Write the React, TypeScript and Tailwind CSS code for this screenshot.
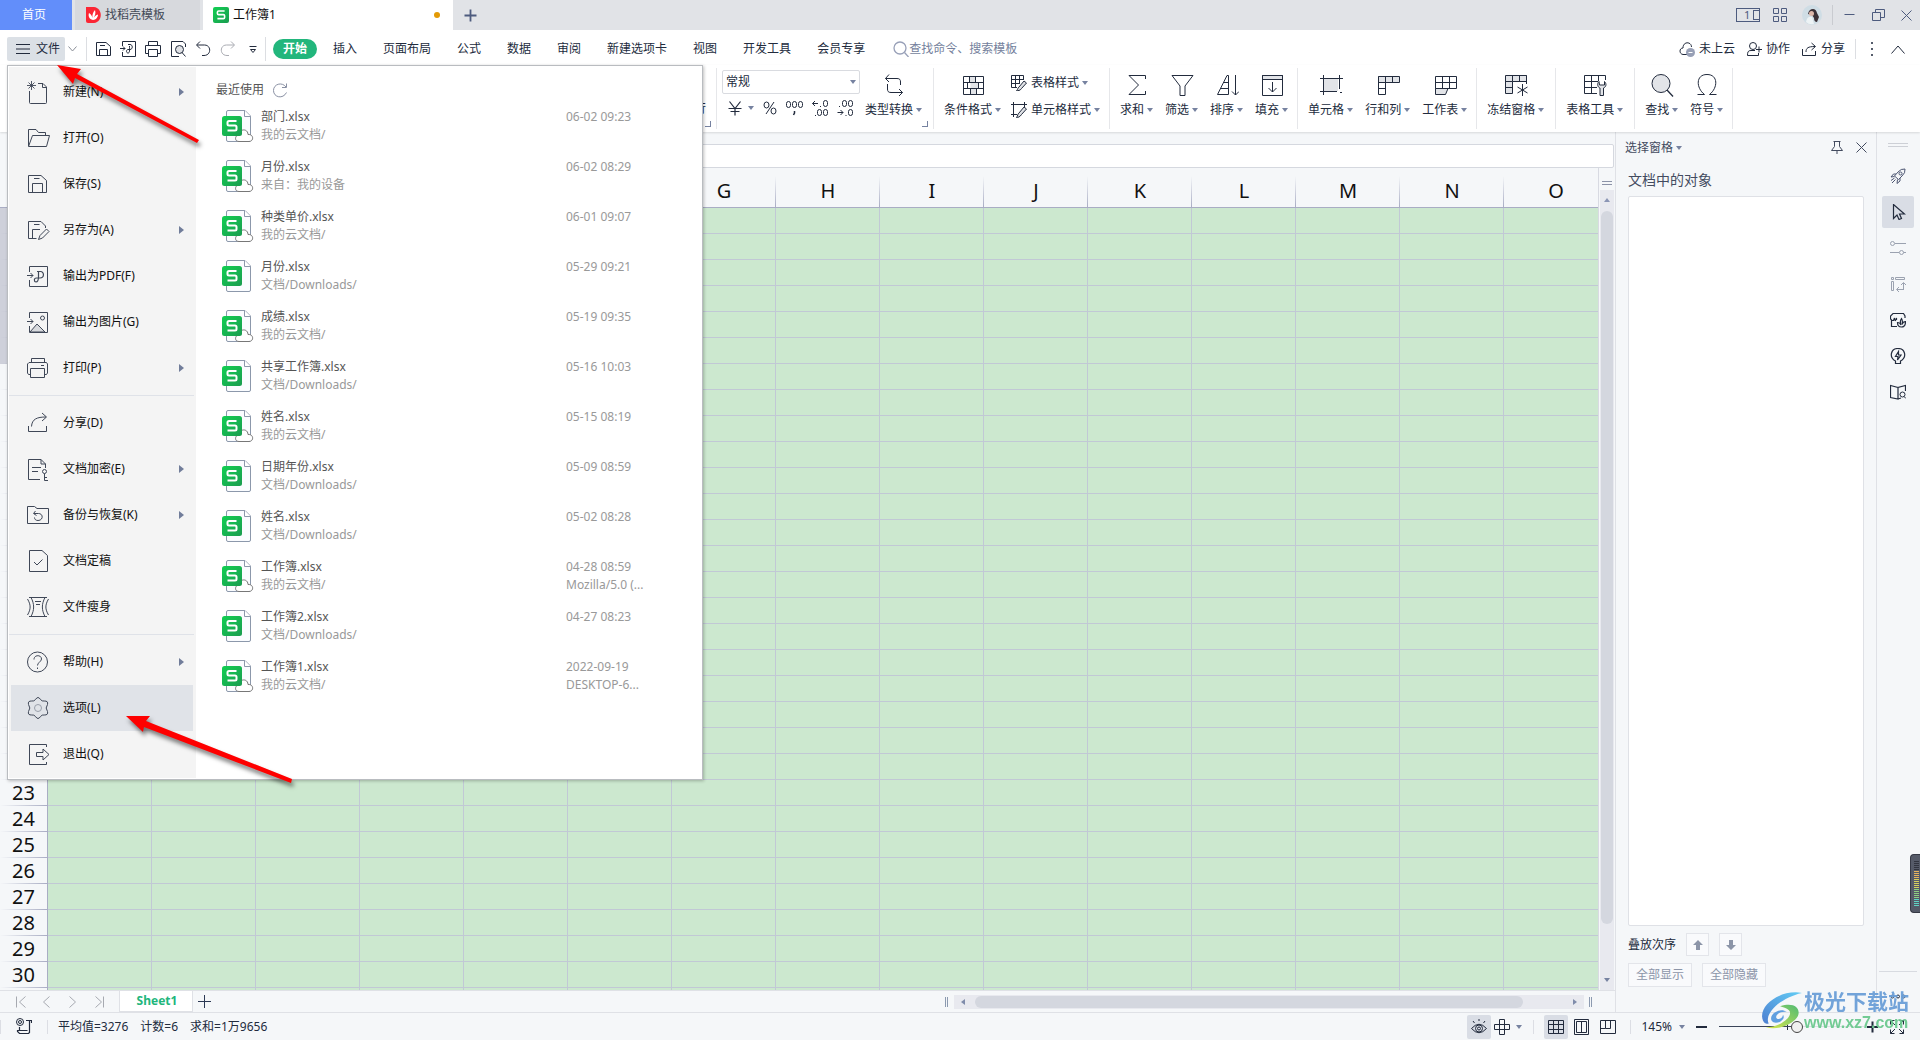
import React from 'react';

type IconProps = { w?: number; h?: number; className?: string; children: React.ReactNode };

function Icon({ w = 24, h = 24, className = '', children }: IconProps) {
  return (
    <svg width={w} height={h} viewBox={`0 0 ${w} ${h}`} fill="none" stroke="currentColor" strokeWidth="1" className={`shrink-0 ${className}`} aria-hidden="true">
      {children}
    </svg>
  );
}

function Caret({ className = 'text-[#7682a0]' }: { className?: string }) {
  return (
    <Icon w={6} h={4} className={className}>
      <path d="M0 0H6L3 4Z" fill="currentColor" stroke="none" />
    </Icon>
  );
}

const icons = {
  create: (
    <Icon>
      <path d="M12 3.500H17L20.500 7V22.500Q20.500 23.500 19.500 23.500H4.500Q3.500 23.500 3.500 22.500V11M16.500 3.500V7.500H20.500" />
      <path d="M5.500 1V10M1 5.500H10M2.500 2.500L8.500 8.500M8.500 2.500L2.500 8.500" strokeWidth="0.900" />
    </Icon>
  ),
  open: (
    <Icon>
      <path d="M2.500 20V3.500H10L12.500 6.500H19.500V9.500M2.500 20.500L6.500 9.500H23.500L20.500 20.500H2.500Z" />
    </Icon>
  ),
  save: (
    <Icon>
      <path d="M2.500 3.500H15L20.500 8.500V20.500H2.500ZM6.500 20.500V11.500H16.500V20.500M8 6.500H13.500" />
    </Icon>
  ),
  saveAs: (
    <Icon>
      <path d="M10.500 20.500H2.500V3.500H15L19.500 8V10M6.500 20V11.500H14M8 6.500H13.500" />
      <path d="M12.500 21.500L14 17.500L20.500 11L23 13.500L16.500 20Z" />
    </Icon>
  ),
  pdf: (
    <Icon>
      <path d="M3.500 8V2.500H21.500V22.500H3.500V16" />
      <path d="M1 11.500H7M4.500 9L7 11.500L4.500 14" />
      <path d="M11 7.500H14.500C18.500 7.500 18.500 14 14 14H10.500C7.500 14 8 18 10 18C12.500 18 12.500 15 12.500 12.500V7.500" strokeWidth="1.200" />
    </Icon>
  ),
  image: (
    <Icon>
      <path d="M4 22L11 14L19 22Z" fill="#d8dade" />
      <path d="M3.500 8V2.500H21.500V22.500H3.500V16M1 11.500H7M4.500 9L7 11.500L4.500 14" />
      <circle cx="16.500" cy="8" r="2" />
    </Icon>
  ),
  print: (
    <Icon>
      <path d="M5.500 6V2.500H18.500V6M4.500 18.500H2.500L1.500 17V8L3 6.500H20.500L21.500 8V17L20.500 18.500H18.500M4.500 12.500H18.500V21.500H4.500ZM15 9.500H18" />
    </Icon>
  ),
  share: (
    <Icon>
      <path d="M2.500 15V20.500H20.500V15M5.500 15.500C6 8 11 6 20 6M16 2L20.500 6L16 10" />
    </Icon>
  ),
  encrypt: (
    <Icon>
      <path d="M14 22.500H2.500V2.500H15L19.500 7V11M15 2.500V7H19.500M6 10.500H15M6 14.500H12" />
      <path d="M18.500 16.500V23.500H22M18.500 20.500H21" />
      <circle cx="18.500" cy="14.500" r="2" />
    </Icon>
  ),
  backup: (
    <Icon>
      <path d="M1.500 20.500V3.500H8.500L11 5.500H22.500V20.500ZM9.500 8L7.500 10.500L10.500 12.500M8 10.500H12.500C17.500 10.500 17.500 17.500 12 17.500C9.500 17.500 8.500 16 8.500 14.500" />
    </Icon>
  ),
  finalize: (
    <Icon>
      <path d="M3.500 1.500H16L21.500 6.500V22.500H3.500ZM8 13L11 16L16.500 10.500" />
    </Icon>
  ),
  slim: (
    <Icon>
      <path d="M3 2.500H21M3 21.500H21M5 2.500C8.500 9 8.500 15 5 21.500M19 2.500C15.500 9 15.500 15 19 21.500M1.500 4C5 10 5 14 1.500 20M22.500 4C19 10 19 14 22.500 20M9 6.500H15M10 9.500H14" />
    </Icon>
  ),
  help: (
    <Icon>
      <circle cx="11.500" cy="12" r="10" />
      <path d="M8 9.500C8 4.500 15.500 4.500 15.500 9C15.500 12 11.500 12 11.500 15.500M11.500 17.500V19" />
    </Icon>
  ),
  options: (
    <Icon>
      <path d="M9.500 3.500Q12 -0.500 14.500 3.500Q16 5.500 18.200 5Q22.500 4.800 21.500 8.500Q18.800 12 21.500 15.500Q22.500 19.200 18.200 19Q16 18.500 14.500 20.500Q12 24.500 9.500 20.500Q8 18.500 5.800 19Q1.500 19.200 2.500 15.500Q5.200 12 2.500 8.500Q1.500 4.800 5.800 5Q8 5.500 9.500 3.500Z" />
      <circle cx="12" cy="12" r="3.500" className="text-[#9aa0ab]" />
    </Icon>
  ),
  exit: (
    <Icon>
      <path d="M20.500 5V2.500H3.500V22.500H20.500V20M10.500 10.500H17V7L23 12.500L17 18V14.500H10.500Z" />
    </Icon>
  ),
};

const menuGroups = [
  [
    { label: '新建(N)', icon: icons.create, more: true },
    { label: '打开(O)', icon: icons.open },
    { label: '保存(S)', icon: icons.save },
    { label: '另存为(A)', icon: icons.saveAs, more: true },
    { label: '输出为PDF(F)', icon: icons.pdf },
    { label: '输出为图片(G)', icon: icons.image },
    { label: '打印(P)', icon: icons.print, more: true },
  ],
  [
    { label: '分享(D)', icon: icons.share },
    { label: '文档加密(E)', icon: icons.encrypt, more: true },
    { label: '备份与恢复(K)', icon: icons.backup, more: true },
    { label: '文档定稿', icon: icons.finalize },
    { label: '文件瘦身', icon: icons.slim },
  ],
  [
    { label: '帮助(H)', icon: icons.help, more: true },
    { label: '选项(L)', icon: icons.options, active: true },
    { label: '退出(Q)', icon: icons.exit },
  ],
];

const recentFiles = [
  { name: '部门.xlsx', path: '我的云文档/', date: '06-02 09:23', cloud: true },
  { name: '月份.xlsx', path: '来自：我的设备', date: '06-02 08:29', cloud: true },
  { name: '种类单价.xlsx', path: '我的云文档/', date: '06-01 09:07', cloud: true },
  { name: '月份.xlsx', path: '文档/Downloads/', date: '05-29 09:21' },
  { name: '成绩.xlsx', path: '我的云文档/', date: '05-19 09:35', cloud: true },
  { name: '共享工作簿.xlsx', path: '文档/Downloads/', date: '05-16 10:03' },
  { name: '姓名.xlsx', path: '我的云文档/', date: '05-15 08:19', cloud: true },
  { name: '日期年份.xlsx', path: '文档/Downloads/', date: '05-09 08:59' },
  { name: '姓名.xlsx', path: '文档/Downloads/', date: '05-02 08:28' },
  { name: '工作簿.xlsx', path: '我的云文档/', date: '04-28 08:59', device: 'Mozilla/5.0 (...', cloud: true },
  { name: '工作簿2.xlsx', path: '文档/Downloads/', date: '04-27 08:23' },
  { name: '工作簿1.xlsx', path: '我的云文档/', date: '2022-09-19', device: 'DESKTOP-6...', cloud: true },
];

const ribbonTabs = ['插入', '页面布局', '公式', '数据', '审阅', '新建选项卡', '视图', '开发工具', '会员专享'];
// the first six columns lie under the open file menu
const columns = ['', '', '', '', '', '', 'G', 'H', 'I', 'J', 'K', 'L', 'M', 'N', 'O'];
const rows = Array.from({ length: 31 }, (_, i) => i + 1);

function SheetLogo({ size = 16 }: { size?: number }) {
  return (
    <svg width={size} height={size} viewBox="0 0 20 20" className="shrink-0" aria-hidden="true">
      <defs>
        <linearGradient id="sheetGreen" x1="0" y1="0" x2="1" y2="1">
          <stop offset="0" stopColor="#12cf52" />
          <stop offset="1" stopColor="#1a9c50" />
        </linearGradient>
      </defs>
      <rect width="20" height="20" rx="2.500" fill="url(#sheetGreen)" />
      <path d="M14.500 5H7Q5.500 5 5.500 6.500V8Q5.500 9.500 7 9.500H13Q14.500 9.500 14.500 11V13Q14.500 14.500 13 14.500H5.500" fill="none" stroke="#fff" strokeWidth="2" />
    </svg>
  );
}

function FileIcon({ cloud }: { cloud?: boolean }) {
  return (
    <div className="relative mt-[2px] h-8 w-8 shrink-0">
      <Icon w={32} h={34} className="text-[#8c98ab]">
        <path d="M6 0.500H23L28.500 6V30Q28.500 31.500 27 31.500H6Q4.500 31.500 4.500 30V2Q4.500 0.500 6 0.500Z" fill="#fafcff" />
        <path d="M22.500 0.500V6.500H28.500" fill="#fff" />
        {cloud && <path d="M17 31.500C12 31.500 13 25 16.500 25.500C17.500 18 26 18.500 26 24.500C32 24 32 31.500 27 31.500Z" fill="#fff" stroke="#777" />}
      </Icon>
      <div className="absolute left-0 top-[6px]">
        <SheetLogo size={20} />
      </div>
    </div>
  );
}

function TitleBar() {
  return (
    <header className="flex h-[30px] shrink-0 bg-[#e1e3e7] text-[#434957]">
      <button className="w-[72px] bg-[#628efa] pr-1 text-white">首页</button>
      <button className="ml-[3px] flex w-[125px] items-center gap-1 bg-[#d7d9dd] pl-[11px]">
        <svg width="15" height="16" viewBox="0 0 15 16" aria-hidden="true">
          <path d="M0 0H8C17 1 17 15 8 16H2Q0 16 0 14Z" fill="#fb2634" />
          <path d="M7 13C3 12 2 9 3 6C5 7 6 9 6.500 11C6 8 7 5 9 3C10 6 9 9 7.500 11C9 9 10 8 12 7.500C12 10 10 13 7 13Z" fill="#fff" />
        </svg>
        找稻壳模板
      </button>
      <button className="ml-[3px] flex w-[250px] items-center gap-1 bg-white pl-[10px] text-[#111]">
        <SheetLogo />
        工作簿1
        <span className="ml-auto mr-[13px] h-[6px] w-[6px] rounded-full bg-[#e39a06]"></span>
      </button>
      <button aria-label="新建标签" className="ml-[11px] text-[#4d5b7e]">
        <Icon w={13} h={13}><path d="M6.500 0.500V12.500M0.500 6.500H12.500" strokeWidth="1.800" /></Icon>
      </button>
      <div className="ml-auto flex items-center pr-2 text-[#4d5b7e]">
        <button aria-label="窗口" className="relative flex h-[14px] w-6 items-center border border-[#4d5b7e] pl-[7px] text-[11px]">
          1
          <span className="absolute right-0 top-[1px] h-[10px] w-[6px] border border-r-0 border-[#4d5b7e]"></span>
        </button>
        <button aria-label="应用" className="ml-[13px]">
          <Icon w={14} h={14}><path d="M0.500 0.500H5.500V5.500H0.500ZM8.500 0.500H13.500V5.500H8.500ZM0.500 8.500H5.500V13.500H0.500ZM8.500 8.500H13.500V13.500H8.500Z" /></Icon>
        </button>
        <button aria-label="账号" className="ml-[15px]">
          <svg width="20" height="20" viewBox="0 0 20 20" aria-hidden="true">
            <circle cx="10" cy="10" r="10" fill="#cfdde5" />
            <path d="M6 9Q7 4 11 4Q14 4 15 8L17 12L15 17Q12 17 12 13L10 10Z" fill="#3a3036" />
            <ellipse cx="9.500" cy="8.500" rx="2.500" ry="2.500" fill="#dcb7aa" />
            <path d="M4 17Q5 11 10 12L12 19Q7 20 4 17Z" fill="#edf3f5" />
          </svg>
        </button>
        <span className="ml-[10px] h-5 w-px bg-[#c9cbd0]"></span>
        <button aria-label="最小化" className="ml-[11px]"><Icon w={11} h={12}><path d="M0.500 5.500H10.500" /></Icon></button>
        <button aria-label="还原" className="ml-[17px]"><Icon w={13} h={12}><path d="M0.500 3.500H8.500V11.500H0.500ZM3.500 3.500V0.500H12.500V8.500H8.500" /></Icon></button>
        <button aria-label="关闭" className="ml-4"><Icon w={11} h={11}><path d="M0.500 0.500L10.500 10.500M10.500 0.500L0.500 10.500" /></Icon></button>
      </div>
    </header>
  );
}

function MenuRow() {
  const quick = [
    { label: '保存', icon: <Icon w={18} h={18}><path d="M2.500 2.500H12L16.500 6.500V15.500H2.500ZM5.500 15.500V9.500H13.500V15.500M6 5.500H11" /></Icon> },
    { label: '输出为PDF', icon: <Icon w={18} h={18}><path d="M3.500 6V1.500H16.500V16.500H3.500V12M1 8.500H6M4 6.500L6 8.500L4 10.500M9 4.500H11C14 4.500 14 9.500 11 9.500H9C7 9.500 7 13 9 13C11 13 10.500 10 10.500 6" /></Icon> },
    { label: '打印', icon: <Icon w={18} h={18}><path d="M4.500 5V1.500H13.500V5M4.500 13.500H1.500V5.500H16.500V13.500H13.500M4.500 9.500H13.500V16.500H4.500Z" /></Icon> },
    { label: '打印预览', icon: <Icon w={18} h={18}><path d="M10 16.500H2.500V1.500H14L16.500 4V7" /><circle cx="10.500" cy="9.500" r="4" fill="#dfe1e5" /><path d="M13 12.500L16.500 16.500" /></Icon> },
    { label: '撤销', icon: <Icon w={18} h={18}><path d="M6 1.500L2.500 5L6 8.500M3 5H10.500C17.500 5 17.500 15.500 10 15.500H8" /></Icon> },
    { label: '恢复', icon: <Icon w={18} h={18} className="text-[#a9abb2]"><path d="M12 1.500L15.500 5L12 8.500M15 5H7.500C0.500 5 0.500 15.500 8 15.500H10" /></Icon> },
    { label: '更多', icon: <Icon w={18} h={18}><path d="M5.500 6.500H12.500M6.500 9.500H11.500L9 12.500Z" /></Icon> },
  ];
  return (
    <div className="flex h-[35px] shrink-0 items-center bg-white pt-[3px] text-[#222b3d]">
      <button className="ml-[7px] flex h-6 w-[58px] items-center gap-[6px] rounded-xs bg-[#dbe0e6] pl-[9px]">
        <Icon w={14} h={10}><path d="M0 0.500H14M0 5H14M0 9.500H14" /></Icon>
        文件
      </button>
      <button aria-label="文件选项" className="flex w-[15px] justify-center text-[#8b8f98]">
        <Icon w={9} h={6}><path d="M0.500 0.500L4.500 5L8.500 0.500" /></Icon>
      </button>
      <span className="ml-[6px] h-6 w-px bg-[#dcdee2]"></span>
      <div className="flex pl-[3px]">
        {quick.map((q) => (
          <button key={q.label} aria-label={q.label} className="flex w-[25px] justify-center">{q.icon}</button>
        ))}
      </div>
      <span className="h-6 w-px bg-[#dcdee2]"></span>
      <button className="ml-[7px] h-5 w-11 rounded-full bg-[#22b67c] font-bold text-white">开始</button>
      <nav className="ml-[3px] flex">
        {ribbonTabs.map((t) => (
          <button key={t} className="whitespace-nowrap px-[13px]">{t}</button>
        ))}
      </nav>
      <label className="ml-[15px] flex items-center text-[#747f9c]">
        <Icon w={16} h={16} className="text-[#98a0b8]"><circle cx="7" cy="7" r="6" strokeWidth="1.300" /><path d="M11.500 11.500L15.500 16" strokeWidth="1.300" /></Icon>
        <input aria-label="查找命令" placeholder="查找命令、搜索模板" className="w-[130px] bg-transparent outline-none placeholder:text-[#747f9c] placeholder:opacity-100" />
      </label>
      <div className="ml-auto flex items-center pr-[15px]">
        <button className="flex items-center gap-1">
          <Icon w={16} h={16}><path d="M8 13.500H4C0 13 0 7 4 7C4 0 12.500 0.500 12.500 6" /><circle cx="11.500" cy="11.500" r="4.500" fill="#98a0b6" stroke="none" /><path d="M9.500 11.500H13.500" stroke="#fff" /></Icon>
          未上云
        </button>
        <button className="ml-3 flex items-center gap-1">
          <Icon w={15} h={15}><circle cx="6" cy="4" r="3.500" /><path d="M8 8.500H4C1 8.500 0.500 10 0.500 13.500H11.500V11M9 7.500H15M12 4.500V10.500" /></Icon>
          协作
        </button>
        <button className="ml-3 flex items-center gap-1">
          <Icon w={15} h={15}><path d="M0.500 7V13.500H13.500V9M4 10C4 6 6 4.500 13 4.500M9.500 1L13.500 4.500L9.500 8" /></Icon>
          分享
        </button>
        <span className="ml-[10px] h-5 w-px bg-[#dcdee2]"></span>
        <button aria-label="更多" className="ml-3 flex w-2 flex-col items-center gap-1">
          <i className="h-[2px] w-[2px] bg-[#555c6b]"></i><i className="h-[2px] w-[2px] bg-[#555c6b]"></i><i className="h-[2px] w-[2px] bg-[#555c6b]"></i>
        </button>
        <button aria-label="收起功能区" className="ml-[15px]"><Icon w={14} h={9}><path d="M0.500 8.500L7 1L13.500 8.500" /></Icon></button>
      </div>
    </div>
  );
}

function RibbonButton({ label, children }: { label: string; children: React.ReactNode }) {
  return (
    <button className="flex shrink-0 flex-col items-start gap-1 pt-[5px]">
      <span className="flex h-6 w-full justify-center"><Icon>{children}</Icon></span>
      <span className="flex items-center gap-[3px] whitespace-nowrap leading-[18px]">{label}<Caret /></span>
    </button>
  );
}

function RibbonGroup({ className = 'gap-3 pr-[9px]', children }: { className?: string; children: React.ReactNode }) {
  return <div className={`my-[3px] flex shrink-0 border-r border-[#e6e7ea] pl-[10px] ${className}`}>{children}</div>;
}

function CornerMark() {
  return (
    <button aria-label="更多设置" className="absolute bottom-[2px] right-[5px] h-[6px] w-[6px] border-b border-r border-[#7682a0]"></button>
  );
}

function Ribbon() {
  return (
    <div className="relative z-10 flex h-[67px] shrink-0 overflow-hidden bg-white text-[#222b3d] shadow-[0_1px_2px_rgba(0,0,0,0.12)]">
      <div className="relative my-[3px] flex w-[717px] shrink-0 items-end justify-end border-r border-[#e6e7ea] pb-[12px] pr-[10px]">
        <button className="leading-4">行</button>
        <CornerMark />
      </div>
      <div className="relative my-[3px] flex shrink-0 gap-[5px] border-r border-[#e6e7ea] pl-[5px] pr-[11px]">
        <div className="w-[138px] pt-[2px]">
          <div className="relative">
            <select aria-label="数字格式" className="h-6 w-full appearance-none rounded-xs border border-[#d9dbe0] bg-white pl-[3px]">
              <option>常规</option>
            </select>
            <Caret className="pointer-events-none absolute right-1 top-[10px] text-[#7682a0]" />
          </div>
          <div className="flex gap-[9px] pl-[6px] pt-[5px]">
            <button aria-label="货币" className="flex items-center gap-[6px]">
              <Icon w={14} h={18}><path d="M1.500 2.500L7 9.500L12.500 2.500M0.500 9.500H13.500M2.500 12.500H11.500M7 9.500V16.500" strokeWidth="1.200" /></Icon>
              <Caret />
            </button>
            <button aria-label="百分比" className="flex items-center">
              <Icon w={14} h={18}><ellipse cx="3.500" cy="6" rx="2.500" ry="3" /><ellipse cx="10.500" cy="12" rx="2.500" ry="3" /><path d="M11 3L3 15" /></Icon>
            </button>
            <button aria-label="千位分隔" className="flex items-center">
              <Icon w={17} h={18}><rect x="0.500" y="2.500" width="4" height="6" rx="2" /><rect x="6.500" y="2.500" width="4" height="6" rx="2" /><rect x="12.500" y="2.500" width="4" height="6" rx="2" /><path d="M8.500 12V14L7.500 16" strokeWidth="1.500" /></Icon>
            </button>
            <button aria-label="增加小数位" className="flex items-center">
              <Icon w={16} h={18}><path d="M0.500 4.500H6M3 2L0.500 4.500L3 7M8 7.500H9M3 16.500H4" /><rect x="11.500" y="1.500" width="4" height="6" rx="2" /><rect x="5.500" y="10.500" width="4" height="6" rx="2" /><rect x="11.500" y="10.500" width="4" height="6" rx="2" /></Icon>
            </button>
            <button aria-label="减少小数位" className="flex items-center">
              <Icon w={16} h={18}><path d="M0.500 13.500H6M3.500 11L6 13.500L3.500 16M2 7.500H3M8.500 16.500H9.500" /><rect x="5.500" y="1.500" width="4" height="6" rx="2" /><rect x="11.500" y="1.500" width="4" height="6" rx="2" /><rect x="11.500" y="10.500" width="4" height="6" rx="2" /></Icon>
            </button>
          </div>
        </div>
        <RibbonButton label="类型转换">
          <path d="M7 1.500L3.500 5.500L7 9M3.500 5.500H15C18 5.500 18.500 7 18.500 9V12M5.500 11V16C5.500 18 6 19.500 9 19.500H20.500M17 16L20.500 19.500L17 23" />
        </RibbonButton>
        <CornerMark />
      </div>
      <RibbonGroup className="gap-[10px] pr-[9px]">
        <RibbonButton label="条件格式">
          <path d="M8.500 3.500H14.500V9.500H8.500ZM9.500 9.500H17.500V15.500H15.500V21.500H9.500Z" fill="#e2e4e8" stroke="none" />
          <path d="M2.500 3.500H22.500V21.500H2.500ZM2.500 9.500H22.500M2.500 15.500H22.500M8.500 3.500V9.500M14.500 3.500V9.500M6.500 9.500V15.500M17.500 9.500V15.500M9.500 15.500V21.500M15.500 15.500V21.500" />
        </RibbonButton>
        <div className="flex flex-col gap-[11px] pt-[7px]">
          <button className="flex h-4 items-center gap-1 whitespace-nowrap">
            <Icon w={16} h={16}><path d="M6 12.500H0.500V0.500H12.500V5M0.500 4.500H12.500M0.500 8.500H9M4.500 0.500V12.500M8.500 0.500V9" /><path d="M8 12L13 6L15.500 8L10.500 13.500C9 16 7 15.500 5.500 15.500C7 14.500 6.500 13 8 12Z" fill="#dfe1e5" /></Icon>
            <span className="flex items-center gap-[3px]">表格样式<Caret /></span>
          </button>
          <button className="flex h-4 items-center gap-1 whitespace-nowrap">
            <Icon w={16} h={16}><path d="M0 2.500H16M2.500 0V15M13.500 0V5M0 12.500H6" /><path d="M8 11L13 5L15.500 7L10.500 12.500C9 15 7 15.500 5.500 15.500C7 13.500 6.500 12 8 11Z" fill="#dfe1e5" /></Icon>
            <span className="flex items-center gap-[3px]">单元格样式<Caret /></span>
          </button>
        </div>
      </RibbonGroup>
      <RibbonGroup>
        <RibbonButton label="求和"><path d="M20.500 6V2.500H4L13.500 12L4 21.500H20.500V18" /></RibbonButton>
        <RibbonButton label="筛选"><path d="M2 2.500H23L15 13V22.500H10V13Z" /></RibbonButton>
        <RibbonButton label="排序"><path d="M13.500 21.500V2.500H12L2.500 21.500H13.500M9 9.500H13.500M6 15.500H13.500M20.500 2V22M17 18.500L20.500 22L24 18.500" /></RibbonButton>
        <RibbonButton label="填充"><path d="M2.500 2.500H22.500V6.500H2.500Z" fill="#e2e4e8" /><path d="M2.500 2.500H22.500V22.500H2.500ZM12.500 9V19M8.500 15L12.500 19L16.500 15" /></RibbonButton>
      </RibbonGroup>
      <RibbonGroup>
        <RibbonButton label="单元格"><path d="M4 5H19V18H4Z" fill="#e2e4e8" stroke="none" /><path d="M1 5.500H24M4.500 2V22M20.500 2V16M1 18.500H18M21 19.500H23" /></RibbonButton>
        <RibbonButton label="行和列"><path d="M2.500 3.500H23.500V9.500H2.500Z" fill="#e2e4e8" /><path d="M9.500 3.500V21.500H2.500V3.500M16.500 3.500V9.500M2.500 15.500H9.500" /></RibbonButton>
        <RibbonButton label="工作表"><path d="M2.500 15.500H15L12.500 21.500H2.500Z" fill="#e2e4e8" /><path d="M2.500 3.500H23.500V15.500H2.500ZM2.500 9.500H23.500M9.500 3.500V15.500M16.500 3.500V15.500" /></RibbonButton>
      </RibbonGroup>
      <RibbonGroup className="pr-[11px]">
        <RibbonButton label="冻结窗格">
          <path d="M1.500 2.500H22.500V8.500H8.500V20.500H1.500Z" fill="#e2e4e8" />
          <path d="M22.500 2.500V11M1.500 8.500H8.500V2.500M15.500 2.500V8.500M1.500 14.500H8.500M18.500 11V23M13.500 14L23.500 20M23.500 14L13.500 20" />
        </RibbonButton>
      </RibbonGroup>
      <RibbonGroup className="pr-[11px]">
        <RibbonButton label="表格工具">
          <path d="M14 20.500H1.500V2.500H22.500V7M1.500 8.500H15M1.500 14.500H14M8.500 2.500V20.500M15.500 2.500V8" />
          <path d="M16 8.500C13.500 11 15 14.500 17 15V22.500H20.500V15C23 14 24 11 21.500 8.500V12H16.500Z" fill="#e2e4e8" />
        </RibbonButton>
      </RibbonGroup>
      <RibbonGroup>
        <RibbonButton label="查找"><circle cx="11" cy="10.500" r="9" fill="#e2e4e8" /><path d="M17 17L23 23.500" strokeWidth="1.300" /></RibbonButton>
        <RibbonButton label="符号"><path d="M2.500 21.500H9.500C1 15 0.500 1.500 12 1.500C23.500 1.500 23 15 14.500 21.500H21.500" /></RibbonButton>
      </RibbonGroup>
    </div>
  );
}

function FileMenu() {
  return (
    <div className="absolute left-[7px] top-[65px] z-20 flex w-[696px] border border-[#b9bcc0] bg-white p-px shadow-[1px_1px_3px_rgba(0,0,0,0.25)]">
      <div className="w-[187px] shrink-0 bg-[#f4f4f4] pb-px pt-[2px] text-[#111]">
        {menuGroups.map((group, i) => (
          <div key={i} className={i > 0 ? 'mr-[2px] border-t border-[#dfe2e8] pt-1 mt-1' : 'mr-[2px]'}>
            {group.map((item) => (
              <button
                key={item.label}
                className={`mx-[2px] flex h-[46px] w-[182px] items-center gap-[13px] pl-[15px] pr-[9px] ${item.active ? 'bg-[#e0e3e8]' : ''}`}
              >
                <span className="text-[#3f4757]">{item.icon}</span>
                {item.label}
                {item.more && (
                  <Icon w={5} h={8} className="ml-auto text-[#717d9a]"><path d="M0 0L5 4L0 8Z" fill="currentColor" stroke="none" /></Icon>
                )}
              </button>
            ))}
          </div>
        ))}
      </div>
      <div className="flex-1 pl-5">
        <h2 className="flex h-[34px] items-center gap-[9px] pt-3 text-[#555]">
          最近使用
          <button aria-label="刷新">
            <Icon w={15} h={15} className="text-[#8990a3]"><path d="M13 4C9 -1.500 0.500 1 0.500 7.500C0.500 14.500 10 16.500 13.500 9.500M13.500 0.500V4.500H9" /></Icon>
          </button>
        </h2>
        <ul>
          {recentFiles.map((f, i) => (
            <li key={i}>
              <a href="#" className="flex h-[50px] gap-[7px] pl-[6px] pt-[7px] leading-[18px] text-[#999]">
                <FileIcon cloud={f.cloud} />
                <span className="w-[298px]">
                  <span className="block text-[#555]">{f.name}</span>
                  <span className="block">{f.path}</span>
                </span>
                <span>
                  <span className="block">{f.date}</span>
                  <span className="block">{f.device}</span>
                </span>
              </a>
            </li>
          ))}
        </ul>
      </div>
    </div>
  );
}

function Grid() {
  return (
    <div className="flex min-h-0 flex-1">
      <div className="relative min-w-0 flex-1 border-r border-[#d8dae2]">
        <div className="absolute inset-0 overflow-hidden">
          <table className="w-[1608px] table-fixed border-separate border-spacing-0 text-xl leading-none text-[#111]">
            <thead>
              <tr>
                <th className="h-10 w-12 border-b border-r border-[#a9adc4]"></th>
                {columns.map((c, i) => (
                  <th key={i} className="relative h-10 w-[104px] border-b border-[#a9adc4] pt-[6px] font-normal">
                    {c}
                    <span className="absolute bottom-0 right-0 h-[31px] w-px bg-gradient-to-t from-[#a9adc4] to-transparent"></span>
                  </th>
                ))}
              </tr>
            </thead>
            <tbody>
              {rows.map((r) => (
                <tr key={r}>
                  <th className={`relative h-[26px] border-r border-[#a9adc4] p-0 pb-px font-normal ${r < 7 ? 'bg-[#ced0da]' : ''}`}>
                    {r > 22 && r < 31 ? r : ''}
                    <span className="absolute bottom-0 left-0 h-px w-full bg-gradient-to-l from-[#a9adc4] to-transparent"></span>
                  </th>
                  {columns.map((_, i) => (
                    <td key={i} className="h-[26px] border-b border-r border-[#c1c8d5] bg-[#cce8cf] p-0"></td>
                  ))}
                </tr>
              ))}
            </tbody>
          </table>
        </div>
      </div>
      <div className="flex w-4 shrink-0 flex-col items-center">
        <span className="mt-[13px] h-[4px] w-[10px] border-y border-[#8c93a8]"></span>
        <div className="mt-[5px] flex min-h-0 w-[14px] flex-1 flex-col items-center bg-[#e8e9ef] py-2">
          <Icon w={6} h={4} className="text-[#8b95b5]"><path d="M0 4H6L3 0Z" fill="currentColor" stroke="none" /></Icon>
          <div className="mt-[9px] h-[91%] w-3 rounded-full bg-[#d4d7df]"></div>
          <Caret className="mt-auto text-[#7682a0]" />
        </div>
      </div>
    </div>
  );
}

function SheetBar() {
  return (
    <div className="flex h-[22px] shrink-0 items-center border-t border-[#dfe1e6]">
      <div className="flex w-[119px] gap-[15px] pl-4 text-[#a6a9b0]">
        <button aria-label="第一张"><Icon w={11} h={12}><path d="M0.500 0.500V11.500M9.500 0.500L3.500 6L9.500 11.500" /></Icon></button>
        <button aria-label="上一张"><Icon w={11} h={12}><path d="M7.500 0.500L1.500 6L7.500 11.500" /></Icon></button>
        <button aria-label="下一张"><Icon w={11} h={12}><path d="M1.500 0.500L7.500 6L1.500 11.500" /></Icon></button>
        <button aria-label="最后一张"><Icon w={11} h={12}><path d="M1.500 0.500L7.500 6L1.500 11.500M9.500 0.500V11.500" /></Icon></button>
      </div>
      <button className="h-full w-[74px] border-x border-b border-[#dfe1e6] bg-white pl-[2px] font-bold text-[#22b67c]">Sheet1</button>
      <button aria-label="新建工作表" className="ml-[5px] text-[#2c3954]"><Icon w={13} h={13}><path d="M6.500 0V13M0 6.500H13" /></Icon></button>
      <span className="ml-auto h-[10px] w-[3px] border-x border-[#8c9ab0]"></span>
      <div className="ml-[6px] flex h-[14px] w-[39%] items-center bg-[#e8e9ef] px-[7px]">
        <Icon w={4} h={6} className="text-[#7f8cab]"><path d="M4 0V6L0 3Z" fill="currentColor" stroke="none" /></Icon>
        <div className="ml-[10px] h-3 w-[89%] rounded-full bg-[#d4d7df]"></div>
        <Icon w={4} h={6} className="ml-auto text-[#7f8cab]"><path d="M0 0V6L4 3Z" fill="currentColor" stroke="none" /></Icon>
      </div>
      <span className="ml-[5px] mr-[23px] h-[10px] w-[3px] border-x border-[#8c9ab0]"></span>
    </div>
  );
}

function SelectionPane() {
  return (
    <aside className="flex w-[262px] shrink-0 flex-col border-x border-[#dfe1e6] px-3 text-[#434b5f]">
      <div className="-mx-[3px] flex h-[31px] items-center">
        <button className="flex items-center gap-[3px]">选择窗格<Caret /></button>
        <button aria-label="固定" className="ml-auto"><Icon w={14} h={13}><path d="M3.500 0.500H10.500M4.500 0.500V5.500L1.500 9.500H12.500L9.500 5.500V0.500M7 9.500V13" /></Icon></button>
        <button aria-label="关闭" className="ml-3"><Icon w={11} h={11}><path d="M0.500 0.500L10.500 10.500M10.500 0.500L0.500 10.500" /></Icon></button>
      </div>
      <h3 className="mt-[7px] text-sm leading-5">文档中的对象</h3>
      <div className="mt-[6px] flex-1 rounded-xs border border-[#dfe1e6] bg-white"></div>
      <div className="mt-[7px] flex items-center gap-[10px] text-[#222b3d]">
        叠放次序
        <button aria-label="上移" className="flex h-[23px] w-[23px] items-center justify-center border border-[#e3e5ea] bg-[#f9fafc] text-[#8c95a8]">
          <Icon w={10} h={10}><path d="M5 0L10 5H7V10H3V5H0Z" fill="currentColor" stroke="none" /></Icon>
        </button>
        <button aria-label="下移" className="flex h-[23px] w-[23px] items-center justify-center border border-[#e3e5ea] bg-[#f9fafc] text-[#8c95a8]">
          <Icon w={10} h={10}><path d="M5 10L10 5H7V0H3V5H0Z" fill="currentColor" stroke="none" /></Icon>
        </button>
      </div>
      <div className="mb-[25px] mt-[7px] flex gap-[10px] text-[#8c95a8]">
        <button className="h-6 w-16 border border-[#e3e5ea] bg-[#f9fafc]">全部显示</button>
        <button className="h-6 w-16 border border-[#e3e5ea] bg-[#f9fafc]">全部隐藏</button>
      </div>
    </aside>
  );
}

function SideRail() {
  const tools = [
    { label: '快捷', tone: 'text-[#4d5672]', icon: <><path d="M4.500 8L8 4Q11 0.500 15 1Q15.500 5 12 8L8.500 11.500ZM6 6H3.500L1 9L4.500 8.500M10 10V13L7 15.500L7.500 11.500M4.500 10L1 12.500M5.500 11.500L2 15" /><circle cx="10.500" cy="5.500" r="1.500" /></> },
    { label: '选择', tone: 'bg-[#d9dde5] text-[#222b3d]', icon: <path d="M3.500 0.500V14.500L7 11L9 15.500L11.500 14.500L9.500 10H14.500Z" strokeWidth="1.200" /> },
    { label: '属性', tone: 'text-[#9ba2b0]', icon: <><circle cx="2.500" cy="3.500" r="2" /><path d="M5 3.500H16M0 12.500H9M13.500 12.500H16" /><circle cx="11.500" cy="12.500" r="2" /></> },
    { label: '分析', tone: 'text-[#9ba2b0]', icon: <path d="M1.500 1.500H3.500V3.500H1.500ZM5.500 1.500H14.500V3.500H5.500ZM1.500 5.500H3.500V14.500H1.500ZM13.500 14V7M11 9L13.500 6.500L16 9M13.500 13.500H7M9 11L6.500 13.500L9 16" /> },
    { label: '稻壳', tone: 'text-[#222b3d]', icon: <><path d="M1.500 8V14.500H7M15 6V4L13.500 1.500H3L0.500 4V7L2 8.500H3.500L4.500 6V8L5.500 8.500L6.500 6V8" strokeWidth="1.200" /><path d="M7.500 10.500Q7.500 15 11.500 15Q15.500 15 15.500 9.500Q13 9.500 12 12.500Q13 9 11.500 6.500Q9.500 9 11 13Q10 10.500 7.500 10.500Z" strokeWidth="1.200" /></> },
    { label: '灵感', tone: 'text-[#222b3d]', icon: <path d="M5.500 15.500V13C-1.500 9 1 0.500 8 0.500C15 0.500 17.500 9 10.500 13V15.500ZM8.500 3.500L5.500 8.500H8L7.500 12L11 7H8.500Z" strokeWidth="1.200" /> },
    { label: '文献', tone: 'text-[#222b3d]', icon: <><path d="M8 3.500L0.500 1.500V13.500L8 15V3.500L15.500 1.500V7M8 15L11 14" strokeWidth="1.200" /><circle cx="12.500" cy="10.500" r="2.500" /><path d="M14 12.500L16 14.500" /></> },
  ];
  return (
    <aside className="flex w-[43px] shrink-0 flex-col items-center pb-[13px] pr-px pt-[11px]">
      <span className="mb-[13px] h-[4px] w-5 border-y border-[#cdd0d6]"></span>
      <div className="flex flex-col gap-1">
        {tools.map((t) => (
          <button key={t.label} aria-label={t.label} className={`flex h-8 w-8 items-center justify-center rounded-xs ${t.tone}`}>
            <Icon w={16} h={16}>{t.icon}</Icon>
          </button>
        ))}
      </div>
      <span className="mt-auto h-px w-[38px] bg-[#d8dbe1]"></span>
      <button aria-label="更多" className="mt-[22px] text-[#222b3d]">
        <Icon w={16} h={5}><circle cx="2.500" cy="2.500" r="1.500" /><circle cx="8" cy="2.500" r="1.500" /><circle cx="13.500" cy="2.500" r="1.500" /></Icon>
      </button>
    </aside>
  );
}

function StatusBar() {
  return (
    <footer className="flex h-7 shrink-0 items-center border-t border-[#dfe1e6] text-[#222b3d]">
      <span className="h-[14px] w-px bg-[#dcdee4]"></span>
      <button aria-label="录制" className="ml-[15px]">
        <Icon w={16} h={17}><circle cx="4" cy="4" r="3.500" /><circle cx="4" cy="4" r="1.500" /><path d="M10 2.500H15.500V5M13.500 2.500V14.500L12.500 15.500H3.500L1.500 13.500V12.500H11.500M3.500 9V12.500" strokeWidth="1.200" /></Icon>
      </button>
      <span className="ml-[15px] h-[14px] w-px bg-[#dcdee4]"></span>
      <p className="ml-[10px] flex gap-3"><span>平均值=3276</span><span>计数=6</span><span>求和=1万9656</span></p>
      <div className="ml-auto flex items-center pr-4">
        <button aria-label="护眼模式" className="flex h-6 w-6 items-center justify-center rounded-xs bg-[#d9dde5]">
          <Icon w={16} h={16}><path d="M0.500 9.500Q8 1 15.500 9.500Q8 18 0.500 9.500ZM8 0V2M2 2L3.500 4M14 2L12.500 4" /><circle cx="8" cy="9.500" r="3.500" /><circle cx="8" cy="9.500" r="1.500" /></Icon>
        </button>
        <button aria-label="阅读模式" className="ml-[3px] flex items-center gap-[6px]">
          <Icon w={16} h={16}><path d="M5.500 0.500H10.500V15.500H5.500ZM0.500 5.500H15.500V10.500H0.500Z" /></Icon>
          <Caret />
        </button>
        <span className="ml-[11px] h-[14px] w-px bg-[#dcdee4]"></span>
        <button aria-label="普通视图" className="ml-[10px] flex h-6 w-6 items-center justify-center rounded-xs bg-[#d9dde5]">
          <Icon w={16} h={14}><path d="M0.500 0.500H15.500V13.500H0.500ZM0.500 4.500H15.500M0.500 9.500H15.500M5.500 0.500V13.500M10.500 0.500V13.500" /></Icon>
        </button>
        <button aria-label="页面布局" className="ml-[6px]">
          <Icon w={15} h={16}><path d="M0.500 0.500H14.500V15.500H0.500ZM2.500 2.500H12.500V13.500H2.500ZM7.500 2.500V13.500" /></Icon>
        </button>
        <button aria-label="分页预览" className="ml-[11px]">
          <Icon w={16} h={14}><path d="M0.500 0.500H15.500V13.500H0.500ZM5.500 0.500V8.500H0.500M10.500 0.500V8.500H5.500" /></Icon>
        </button>
        <span className="ml-[14px] h-[14px] w-px bg-[#dcdee4]"></span>
        <button className="ml-[10px] flex items-center gap-[7px]">145%<Caret /></button>
        <button aria-label="缩小" className="ml-[11px]"><Icon w={11} h={12}><path d="M0 6H11" strokeWidth="2" /></Icon></button>
        <div className="relative ml-3 flex w-[145px] items-center">
          <span className="absolute left-[68px] h-[7px] w-px bg-[#222b3d]"></span>
          <input
            type="range"
            aria-label="显示比例"
            min={0}
            max={100}
            defaultValue={54}
            className="relative h-3 w-full appearance-none bg-transparent bg-[linear-gradient(to_right,#3a4459_50%,#dde0e5_50%)] bg-[length:100%_1px] bg-center bg-no-repeat [&::-webkit-slider-thumb]:h-3 [&::-webkit-slider-thumb]:w-3 [&::-webkit-slider-thumb]:appearance-none [&::-webkit-slider-thumb]:rounded-full [&::-webkit-slider-thumb]:border [&::-webkit-slider-thumb]:border-[#444] [&::-webkit-slider-thumb]:bg-[#f0f0f0]"
          />
        </div>
        <button aria-label="放大" className="ml-[3px]"><Icon w={11} h={12}><path d="M0 6H11M5.500 0.500V11.500" strokeWidth="2" /></Icon></button>
        <button aria-label="全屏" className="ml-3"><Icon w={14} h={14}><path d="M0.500 4.500V0.500H4.500M9.500 0.500H13.500V4.500M13.500 9.500V13.500H9.500M4.500 13.500H0.500V9.500M0.500 0.500L5 5M13.500 0.500L9 5M13.500 13.500L9 9M0.500 13.500L5 9" /></Icon></button>
      </div>
    </footer>
  );
}

function Pointers() {
  return (
    <svg width="320" height="800" viewBox="0 0 320 800" className="pointer-events-none absolute left-0 top-0 z-30 drop-shadow-[2px_4px_2px_rgba(0,0,0,0.5)]" aria-hidden="true">
      <g fill="#fe0000" stroke="none">
        <path d="M57 65L81 69L77 74L199 140L197 143L75 78L73 84Z" />
        <path d="M126 716L150 716L146 721L292 779L291 783L144 727L143 732Z" />
      </g>
    </svg>
  );
}

function SiteBadge() {
  return (
    <div className="pointer-events-none absolute bottom-[7px] right-[11px] z-30 flex items-center">
      <svg width="44" height="40" viewBox="0 0 44 42" aria-hidden="true">
        <defs>
          <linearGradient id="swirlBlue" x1="0" y1="1" x2="1" y2="0"><stop offset="0" stopColor="#4d7fd1" /><stop offset="1" stopColor="#63cdf5" /></linearGradient>
          <linearGradient id="swirlGreen" x1="0" y1="1" x2="1" y2="0"><stop offset="0" stopColor="#dbe84c" /><stop offset="1" stopColor="#4fba74" /></linearGradient>
        </defs>
        <path d="M43 2C20 -2 -4 16 2 31C4 36 8 34 8 34C3 24 20 7 43 2Z" fill="url(#swirlBlue)" />
        <path d="M20 16C38 10 44 22 36 30C28 38 14 41 5 38C22 38 35 25 29 20C27 18 23 17 20 16Z" fill="url(#swirlGreen)" />
        <path d="M27 22C20 17 8 24 11 31C15 37 27 30 23 25C23 29 17 31 16 28C15 25 20 21 27 22Z" fill="#5f9fe0" />
      </svg>
      <div className="flex flex-col opacity-95">
        <span className="text-[21px] font-bold leading-6 text-[#6b9fd8]">极光下载站</span>
        <span className="font-['Liberation_Sans'] text-base font-bold leading-5 text-[#6cc98f]">www.xz7.com</span>
      </div>
    </div>
  );
}

export default function App() {
  return (
    <div className="relative flex h-screen flex-col overflow-hidden bg-[#f5f7f9] font-['Noto_Sans','Noto_Sans_CJK_SC',sans-serif] text-xs">
      <TitleBar />
      <MenuRow />
      <Ribbon />
      <main className="flex min-h-0 flex-1">
        <div className="flex min-w-0 flex-1 flex-col">
          <div className="flex h-9 shrink-0 items-end pl-2 pr-px">
            <input aria-label="编辑栏" className="h-6 w-full rounded-xs border border-[#d5d8df] bg-white px-2 outline-none" />
          </div>
          <Grid />
          <SheetBar />
        </div>
        <SelectionPane />
        <SideRail />
      </main>
      <StatusBar />
      <FileMenu />
      {/* load meter docked on the right edge */}
      <div className="absolute right-0 top-[854px] z-30 flex h-[59px] w-[10px] flex-col justify-center gap-px rounded-l-sm border border-r-0 border-[#363945] bg-[#555a68] pl-[3px]">
        {Array.from({ length: 23 }, (_, i) => (
          <i key={i} className={`h-px w-[5px] ${i < 5 ? 'bg-[#31343f]' : i < 9 ? 'bg-[#e6b45c]' : i < 14 ? 'bg-[#d6cf5e]' : i < 19 ? 'bg-[#8fd080]' : 'bg-[#5fd3c3]'}`}></i>
        ))}
      </div>
      <Pointers />
      <SiteBadge />
    </div>
  );
}
